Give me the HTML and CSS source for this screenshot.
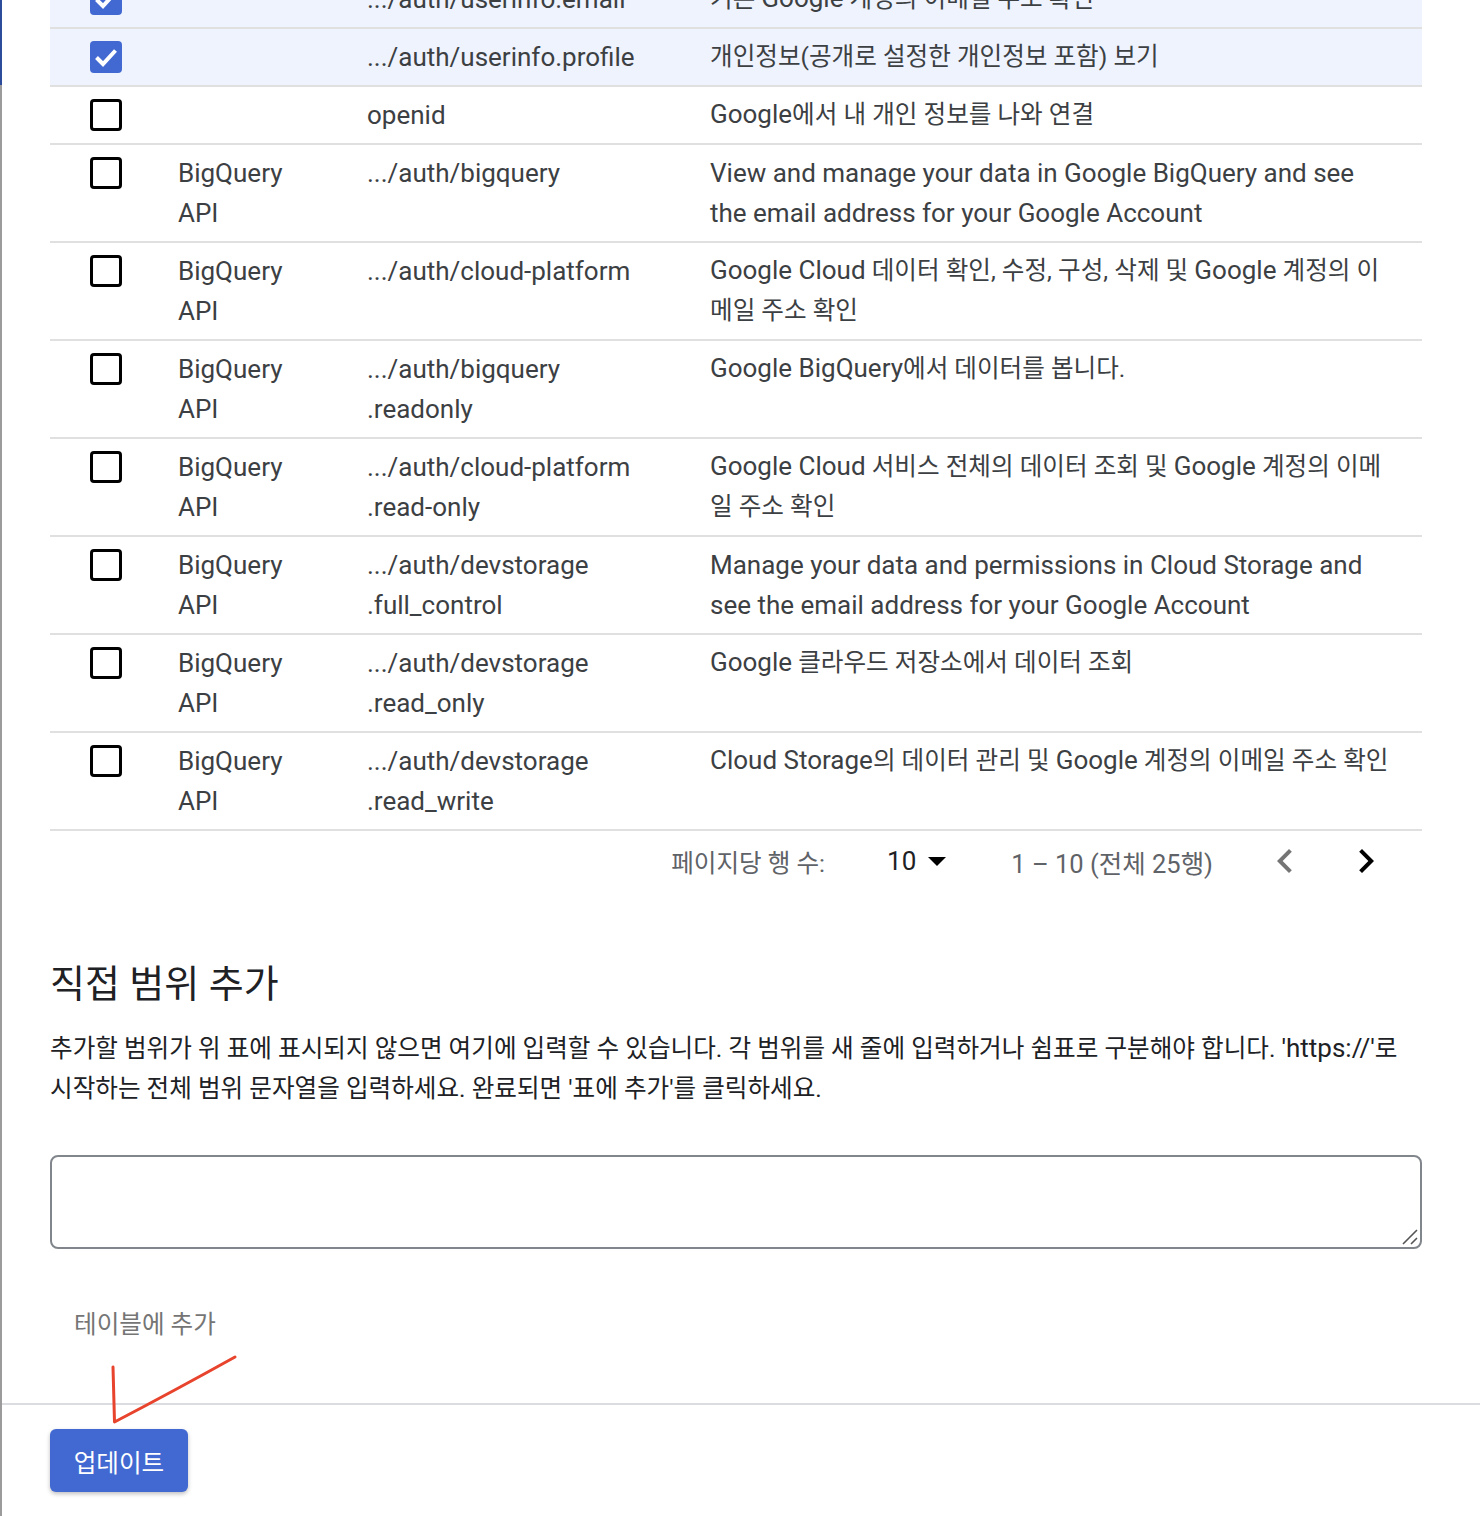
FILE: index.html
```html
<!DOCTYPE html>
<html lang="ko">
<head>
<meta charset="utf-8">
<title>범위</title>
<link rel="stylesheet" href="styles.css">
</head>
<body>
<div class="frame">
  <div class="edge"><div class="edge-top"></div></div>
  <div class="page">
    <main class="content">
      <div class="scopes">
        <div class="row selected">
          <div class="cell-check"><span class="checkbox checked"><svg viewBox="0 0 32 32" width="32" height="32"><path d="M6.5 16.5 L13 23 L25.5 9.5" fill="none" stroke="#fff" stroke-width="4"/></svg></span></div>
          <div class="cell-api"></div>
          <div class="cell-scope">.../auth/userinfo.email</div>
          <div class="cell-desc ko">기본 <span class="lat">Google</span> 계정의 이메일 주소 확인</div>
        </div>
        <div class="row selected">
          <div class="cell-check"><span class="checkbox checked"><svg viewBox="0 0 32 32" width="32" height="32"><path d="M6.5 16.5 L13 23 L25.5 9.5" fill="none" stroke="#fff" stroke-width="4"/></svg></span></div>
          <div class="cell-api"></div>
          <div class="cell-scope">.../auth/userinfo.profile</div>
          <div class="cell-desc ko">개인정보(공개로 설정한 개인정보 포함) 보기</div>
        </div>
        <div class="row">
          <div class="cell-check"><span class="checkbox"></span></div>
          <div class="cell-api"></div>
          <div class="cell-scope">openid</div>
          <div class="cell-desc ko"><span class="lat">Google</span>에서 내 개인 정보를 나와 연결</div>
        </div>
        <div class="row">
          <div class="cell-check"><span class="checkbox"></span></div>
          <div class="cell-api">BigQuery API</div>
          <div class="cell-scope">.../auth/bigquery</div>
          <div class="cell-desc">View and manage your data in Google BigQuery and see the email address for your Google Account</div>
        </div>
        <div class="row">
          <div class="cell-check"><span class="checkbox"></span></div>
          <div class="cell-api">BigQuery API</div>
          <div class="cell-scope">.../auth/cloud-platform</div>
          <div class="cell-desc ko"><span class="lat">Google Cloud</span> 데이터 확인, 수정, 구성, 삭제 및 <span class="lat">Google</span> 계정의 이메일 주소 확인</div>
        </div>
        <div class="row">
          <div class="cell-check"><span class="checkbox"></span></div>
          <div class="cell-api">BigQuery API</div>
          <div class="cell-scope">.../auth/bigquery<wbr>.readonly</div>
          <div class="cell-desc ko"><span class="lat">Google BigQuery</span>에서 데이터를 봅니다.</div>
        </div>
        <div class="row">
          <div class="cell-check"><span class="checkbox"></span></div>
          <div class="cell-api">BigQuery API</div>
          <div class="cell-scope">.../auth/cloud-platform<wbr>.read-only</div>
          <div class="cell-desc ko"><span class="lat">Google Cloud</span> 서비스 전체의 데이터 조회 및 <span class="lat">Google</span> 계정의 이메일 주소 확인</div>
        </div>
        <div class="row">
          <div class="cell-check"><span class="checkbox"></span></div>
          <div class="cell-api">BigQuery API</div>
          <div class="cell-scope">.../auth/devstorage<wbr>.full_control</div>
          <div class="cell-desc">Manage your data and permissions in Cloud Storage and see the email address for your Google Account</div>
        </div>
        <div class="row">
          <div class="cell-check"><span class="checkbox"></span></div>
          <div class="cell-api">BigQuery API</div>
          <div class="cell-scope">.../auth/devstorage<wbr>.read_only</div>
          <div class="cell-desc ko"><span class="lat">Google</span> 클라우드 저장소에서 데이터 조회</div>
        </div>
        <div class="row">
          <div class="cell-check"><span class="checkbox"></span></div>
          <div class="cell-api">BigQuery API</div>
          <div class="cell-scope">.../auth/devstorage<wbr>.read_write</div>
          <div class="cell-desc ko"><span class="lat">Cloud Storage</span>의 데이터 관리 및 <span class="lat">Google</span> 계정의 이메일 주소 확인</div>
        </div>
      </div>

      <div class="pager">
        <span class="pager-label">페이지당 행 수:</span>
        <span class="pager-size">10<svg class="caret" viewBox="0 0 18 9" width="18" height="9"><path d="M0 0 L18 0 L9 9z" fill="#000"/></svg></span>
        <span class="pager-range">1 – 10 (전체 25행)</span>
        <span class="icon-btn"><svg viewBox="0 0 24 24" width="52" height="52"><path d="M15.41 7.41L14 6l-6 6 6 6 1.41-1.41L10.83 12z" fill="#757575"/></svg></span>
        <span class="icon-btn"><svg viewBox="0 0 24 24" width="52" height="52"><path d="M8.59 16.59L10 18l6-6-6-6-1.41 1.41L13.17 12z" fill="#000"/></svg></span>
      </div>

      <section class="manual">
        <h2 class="manual-title">직접 범위 추가</h2>
        <p class="manual-text">추가할 범위가 위 표에 표시되지 않으면 여기에 입력할 수 있습니다. 각 범위를 새 줄에 입력하거나 쉼표로 구분해야 합니다. <span class="lat">'https://'</span>로 시작하는 전체 범위 문자열을 입력하세요. 완료되면 '표에 추가'를 클릭하세요.</p>
        <div class="input-wrap">
          <textarea class="manual-input"></textarea>
          <svg class="grip" viewBox="0 0 16 16" width="16" height="16"><path d="M1 15 L15 1 M9 15 L15 9" stroke="#555" stroke-width="1.6" fill="none"/></svg>
        </div>
        <button class="text-btn" disabled>테이블에 추가</button>
      </section>
    </main>
    <footer class="footer">
      <button class="primary-btn">업데이트</button>
    </footer>
  </div>
  <svg class="annotation" width="1480" height="1516" viewBox="0 0 1480 1516"><path d="M113 1367 L114.5 1422 Q172 1392 235 1357" fill="none" stroke="#e8432c" stroke-width="3" stroke-linecap="round" stroke-linejoin="round"/></svg>
</div>
</body>
</html>
```

FILE: styles.css
```css
* { box-sizing: border-box; }

html, body {
  margin: 0;
  padding: 0;
  background: #fff;
}

body {
  font-family: Roboto, "Noto Sans CJK KR", sans-serif;
  color: #3c4043;
}

.frame {
  position: relative;
  display: flex;
  height: 1516px;
  overflow: hidden;
}

.edge {
  flex: none;
  width: 2px;
  background: #9b9b9b;
}

.edge-top {
  height: 85px;
  background: #2c4b9b;
}

.page {
  flex: 1;
  display: flex;
  flex-direction: column;
}

.content {
  padding: 0 58px 0 48px;
}

.scopes {
  margin-top: -29px;
}

.row {
  display: grid;
  grid-template-columns: 128px 189px 343px 1fr;
  padding: 8px 0;
  border-bottom: 2px solid #e0e0e0;
  font-size: 26px;
  line-height: 40px;
}

.row.selected {
  background: #eef3fd;
}

.ko { font-size: 24.6px; }

.lat {
  font-size: 26px;
  line-height: 1;
}

.cell-check {
  padding-left: 40px;
  padding-top: 4px;
}

.cell-api { padding-right: 59px; }
.cell-scope { padding-right: 63px; }
.cell-desc { padding-right: 31px; }

.checkbox {
  display: block;
  width: 32px;
  height: 32px;
  border: 3px solid #000;
  border-radius: 4px;
  position: relative;
}

.checkbox.checked {
  background: #4169d1;
  border-color: #4169d1;
}

.checkbox svg {
  position: absolute;
  left: -3px;
  top: -3px;
}

.pager {
  display: flex;
  align-items: center;
  justify-content: flex-end;
  height: 60px;
  padding-right: 32px;
  font-size: 24.6px;
  color: #5f6368;
}

.pager-size {
  display: flex;
  align-items: center;
  margin-left: 62px;
  font-size: 26px;
  color: #202124;
}

.caret { margin-left: 12px; }

.pager-range {
  margin-left: 65px;
  font-size: 25.5px;
}

.icon-btn {
  display: flex;
  align-items: center;
  justify-content: center;
  width: 48px;
  height: 48px;
  margin-left: 33px;
}

.pager-range + .icon-btn { margin-left: 48px; }

.manual {
  display: flex;
  flex-direction: column;
  align-items: flex-start;
}

.manual-title {
  margin: 69px 0 0;
  font-size: 38px;
  line-height: 48px;
  font-weight: 400;
  color: #202124;
}

.manual-text {
  margin: 21px 0 0;
  font-size: 24.6px;
  line-height: 40px;
  color: #202124;
}

.input-wrap {
  position: relative;
  width: 100%;
  margin-top: 46px;
}

.manual-input {
  display: block;
  width: 100%;
  height: 94px;
  border: 2px solid #80868b;
  border-radius: 8px;
  font: inherit;
  resize: none;
}

.grip {
  position: absolute;
  right: 4px;
  bottom: 4px;
  pointer-events: none;
}

.text-btn {
  margin-top: 45px;
  height: 56px;
  padding: 0 24px;
  border: none;
  background: transparent;
  font-family: inherit;
  font-size: 24.6px;
  color: #757575;
}

.footer {
  margin-top: 53px;
  border-top: 2px solid #dadce0;
  padding: 24px 0 0 48px;
}

.primary-btn {
  width: 138px;
  height: 63px;
  border: none;
  border-radius: 6px;
  background: #4169d1;
  color: #fff;
  font-family: inherit;
  font-size: 24.6px;
  box-shadow: 0 2px 4px rgba(0,0,0,0.25);
}

.annotation {
  position: absolute;
  left: 0;
  top: 0;
  pointer-events: none;
}
```
